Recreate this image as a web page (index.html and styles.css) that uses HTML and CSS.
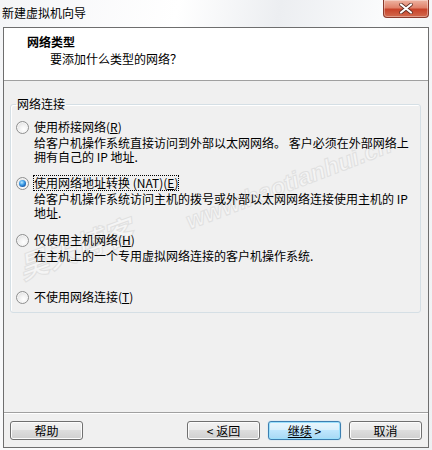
FILE: index.html
```html
<!DOCTYPE html>
<html lang="zh-CN">
<head>
<meta charset="utf-8">
<title>新建虚拟机向导</title>
<link rel="stylesheet" href="styles.css">
</head>
<body>
<div class="frame">
  <div class="titlebar">
    <span class="title">新建虚拟机向导</span>
    <div class="close">
      <svg width="16" height="11" viewBox="0 0 16 11"><path d="M3 1.5 L13 9.5 M13 1.5 L3 9.5" stroke="#5a2a20" stroke-width="3.6" stroke-linecap="round"/><path d="M3 1.5 L13 9.5 M13 1.5 L3 9.5" stroke="#ffffff" stroke-width="2.2" stroke-linecap="round"/></svg>
    </div>
  </div>
  <div class="window">
    <div class="header">
      <div class="h-title">网络类型</div>
      <div class="h-sub">要添加什么类型的网络？</div>
    </div>
    <div class="body">
      <div class="watermark wm-url">www.haotianhui.cn</div>
      <div class="watermark wm-cn">昊天博客</div>
      <fieldset class="group">
        <legend class="legend">网络连接</legend>
        <div class="option">
          <div class="opt-line"><span class="radio"></span><span class="opt-label">使用桥接网络(<u>R</u>)</span></div>
          <div class="desc">
            <div class="desc-line">给客户机操作系统直接访问到外部以太网网络。 客户必须在外部网络上</div>
            <div class="desc-line">拥有自己的 IP 地址.</div>
          </div>
        </div>
        <div class="option opt-2">
          <div class="opt-line"><span class="radio checked"></span><span class="opt-label focus">使用网络地址转换 (NAT)(<u>E</u>)</span></div>
          <div class="desc">
            <div class="desc-line">给客户机操作系统访问主机的拨号或外部以太网网络连接使用主机的 IP</div>
            <div class="desc-line">地址.</div>
          </div>
        </div>
        <div class="option opt-3">
          <div class="opt-line"><span class="radio"></span><span class="opt-label">仅使用主机网络(<u>H</u>)</span></div>
          <div class="desc">
            <div class="desc-line">在主机上的一个专用虚拟网络连接的客户机操作系统.</div>
          </div>
        </div>
        <div class="option opt-4">
          <div class="opt-line"><span class="radio"></span><span class="opt-label">不使用网络连接(<u>T</u>)</span></div>
        </div>
      </fieldset>
    </div>
    <div class="separator"></div>
    <div class="footer">
      <button class="btn">帮助</button>
      <div class="spacer"></div>
      <button class="btn">&lt; 返回</button>
      <button class="btn btn-default"><u>继续</u> &gt;</button>
      <button class="btn">取消</button>
    </div>
  </div>
</div>
</body>
</html>
```

FILE: styles.css
```css
* { box-sizing: border-box; }
html, body { margin: 0; padding: 0; }
body {
  width: 432px;
  height: 450px;
  overflow: hidden;
  font-family: "Noto Sans CJK SC", "Liberation Sans", sans-serif;
  font-size: 12px;
  line-height: 14px;
  color: #000;
  background: #f4f6f8;
}
.frame {
  width: 432px;
  height: 450px;
  display: flex;
  flex-direction: column;
  background: linear-gradient(100deg, #f4f5f7 0%, #ffffff 35%, #eceef1 55%, #fafbfc 75%, #eef0f2 100%);
}
.titlebar {
  height: 27px;
  display: flex;
  justify-content: space-between;
  align-items: flex-start;
  padding: 0 3px 0 2px;
}
.title {
  padding-top: 6px;
  line-height: 14px;
  color: #000;
}
.close {
  width: 46px;
  height: 18px;
  border: 1px solid #8a3a2c;
  border-top: none;
  border-radius: 0 0 4px 4px;
  background: linear-gradient(#eeb4a2 0%, #e0826b 45%, #c8432a 55%, #d26a4e 100%);
  box-shadow: inset 0 0 0 1px rgba(255,255,255,0.35);
  display: flex;
  align-items: center;
  justify-content: center;
}
.window {
  margin: 0 3px 2px 3px;
  height: 421px;
  border: 1px solid #6e6e6e;
  background: #f0f0f0;
  display: flex;
  flex-direction: column;
}
.header {
  height: 53px;
  background: #ffffff;
  border-bottom: 1px solid #a0a0a0;
  padding: 7px 0 0 23px;
}
.h-title { font-weight: bold; line-height: 14px; }
.h-sub { margin: 3px 0 0 23px; line-height: 14px; }
.body {
  position: relative;
  height: 331px;
  padding: 16px 7px 0 6px;
}
.watermark {
  position: absolute;
  font-family: "Liberation Sans", sans-serif;
  font-weight: bold;
  font-style: italic;
  color: #f5f5f5;
  -webkit-text-stroke: 1px #e0e0e0;
  white-space: nowrap;
  pointer-events: none;
  z-index: 0;
}
.wm-url {
  left: 188px;
  top: 126px;
  font-size: 24px;
  line-height: 28px;
  transform: rotate(-21deg);
  transform-origin: left bottom;
}
.wm-cn {
  left: 20px;
  top: 170px;
  font-family: "Noto Sans CJK SC", sans-serif;
  font-size: 30px;
  line-height: 32px;
  transform: rotate(-20deg);
  transform-origin: left bottom;
}
.group {
  position: relative;
  z-index: 1;
  margin: 0;
  width: 411px;
  height: 216px;
  border: 1px solid #d5dfe5;
  border-radius: 3px;
  padding: 9px 0 0 5px;
  box-shadow: 1px 1px 0 #ffffff inset;
}
.legend {
  padding: 0 1px;
  line-height: 14px;
}
.opt-2 { margin-top: 12px; }
.opt-3 { margin-top: 13px; }
.opt-4 { margin-top: 27px; }
.opt-line {
  display: flex;
  align-items: center;
  height: 14px;
}
.radio {
  width: 13px;
  height: 13px;
  flex: 0 0 13px;
  border-radius: 50%;
  border: 1px solid #8e8f8f;
  background: radial-gradient(circle at 60% 65%, #ffffff 0%, #f2f2f2 40%, #d4d4d4 100%);
  box-shadow: inset 0 0 0 1px #f6f6f6;
  margin-right: 5px;
  display: flex;
  align-items: center;
  justify-content: center;
}
.radio.checked::after {
  content: "";
  width: 7px;
  height: 7px;
  border-radius: 50%;
  background: radial-gradient(circle at 40% 35%, #bfeaff 0%, #3d9ee8 40%, #1758a8 75%, #0e3d7a 100%);
}
.opt-label { line-height: 14px; white-space: nowrap; }
.opt-label u { text-decoration: underline; }
.focus {
  outline: 1px dotted #000;
  outline-offset: 0;
}
.desc {
  margin: 2px 0 0 18px;
}
.desc-line {
  height: 14px;
  line-height: 14px;
  white-space: nowrap;
}
.separator {
  height: 2px;
  border-top: 1px solid #a0a0a0;
  border-bottom: 1px solid #ffffff;
}
.footer {
  height: 33px;
  display: flex;
  align-items: flex-start;
  gap: 8px;
  padding: 7px 6px 0 6px;
}
.spacer { flex: 1; }
.btn {
  width: 73px;
  height: 19px;
  padding: 0;
  font-family: "Noto Sans CJK SC", "Liberation Sans", sans-serif;
  font-size: 12px;
  line-height: 16px;
  color: #000;
  border: 1px solid #707070;
  border-radius: 3px;
  background: linear-gradient(#f2f2f2 0%, #ebebeb 45%, #dddddd 50%, #cfcfcf 100%);
  box-shadow: inset 0 0 0 1px #fcfcfc;
}
.btn-default {
  border-color: #3c7fb1;
  background: linear-gradient(#eaf6fd 0%, #d9f0fc 45%, #bee6fd 50%, #a7d9f5 100%);
  box-shadow: inset 0 0 0 1px #9be0fc, 0 0 1px #6fc0ef;
}
.btn u { text-decoration: underline; }
```
